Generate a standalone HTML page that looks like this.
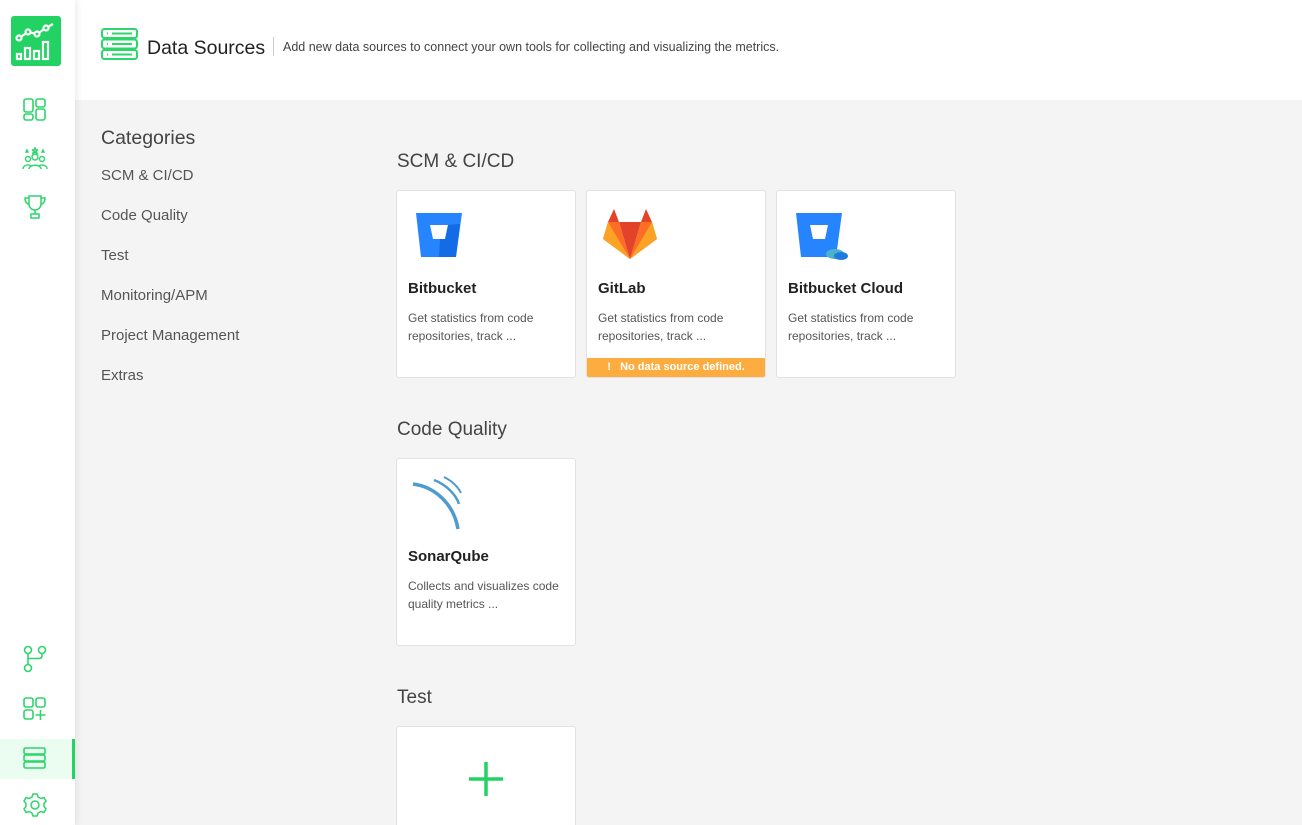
<!DOCTYPE html>
<html style="width:1302px;height:825px;overflow:hidden"><head><meta charset="utf-8"><style>
*{margin:0;padding:0;box-sizing:border-box}
body{width:1302px;height:825px;overflow:hidden;background:#f4f4f4;font-family:"Liberation Sans",sans-serif;position:relative}
.side{position:absolute;left:0;top:0;width:75px;height:825px;background:#fff;box-shadow:2px 0 6px rgba(0,0,0,.08);z-index:2}
.head{position:absolute;left:75px;top:0;right:0;height:100px;background:#fff}
.ic{position:absolute;left:22px}
.cat{position:absolute;left:101px;color:#555;font-size:15px}
.sec{position:absolute;left:397px;font-size:19px;color:#444}
.card{position:absolute;width:180px;height:188px;background:#fff;border:1px solid #e2e2e2;border-radius:3px;overflow:hidden}
.card .t{position:absolute;left:11px;top:89px;font-size:15px;font-weight:bold;color:#222}
.card .d{position:absolute;left:11px;top:118px;font-size:12px;color:#555;line-height:18px;width:160px}
.warn{position:absolute;left:0;right:0;bottom:0;height:19px;background:#fdad3f;color:#fff;font-size:11px;font-weight:bold;text-align:center;line-height:19px}
</style></head><body>
<div class="side">
<svg style="position:absolute;left:11px;top:16px" width="50" height="50" viewBox="0 0 50 50"><rect width="50" height="50" rx="3" fill="#22d363"/><g fill="none" stroke="#fff" stroke-width="2.2"><polyline points="8,22 17,16 26,18 35,12 42,8"/><circle cx="8" cy="22" r="2.5" fill="#22d363"/><circle cx="17" cy="16" r="2.5" fill="#22d363"/><circle cx="26" cy="18" r="2.5" fill="#22d363"/><circle cx="35" cy="12" r="2.5" fill="#22d363"/><rect x="6" y="38" width="4" height="5"/><rect x="14" y="32" width="5" height="11"/><rect x="23" y="35" width="5" height="8"/><rect x="32" y="26" width="5" height="17"/></g></svg>
<svg class="ic" style="top:98px" width="26" height="24" viewBox="0 0 26 24" fill="none" stroke="#2bd66b" stroke-width="1.6"><rect x="2" y="1" width="9" height="13" rx="2"/><rect x="14" y="1" width="9" height="8" rx="2"/><rect x="2" y="16" width="9" height="6" rx="2"/><rect x="14" y="11" width="9" height="11" rx="2"/></svg>
<svg class="ic" style="top:146px" width="26" height="24" viewBox="0 0 26 24" fill="none" stroke="#2bd66b" stroke-width="1.4"><circle cx="13" cy="11" r="3"/><circle cx="6" cy="13" r="2.5"/><circle cx="20" cy="13" r="2.5"/><path d="M7 23c0-5 12-5 12 0M1 23c0-4 6-5 8-3M25 23c0-4-6-5-8-3"/><path d="M13 2l1 2h2l-2 1 1 2-2-1-2 1 1-2-2-1h2zM5 4l1 2-2 0zM21 4l1 2-2 0z"/></svg>
<svg class="ic" style="top:194px" width="26" height="26" viewBox="0 0 26 26" fill="none" stroke="#2bd66b" stroke-width="1.5"><path d="M7 2h12v8a6 6 0 0 1-12 0z"/><path d="M7 4H3c0 4 2 6 4 6M19 4h4c0 4-2 6-4 6M13 16v4M9 20h8v4H9z"/></svg>
<svg class="ic" style="top:645px" width="26" height="28" viewBox="0 0 26 28" fill="none" stroke="#2bd66b" stroke-width="1.6"><circle cx="6" cy="5" r="3.5"/><circle cx="20" cy="5" r="3.5"/><circle cx="6" cy="23" r="3.5"/><path d="M6 8.5v11M20 8.5v2c0 2-1 3-3 3H6"/></svg>
<svg class="ic" style="top:696px" width="26" height="26" viewBox="0 0 26 26" fill="none" stroke="#2bd66b" stroke-width="1.6"><rect x="2" y="2" width="9" height="9" rx="2"/><rect x="14" y="2" width="9" height="9" rx="2"/><rect x="2" y="14" width="9" height="9" rx="2"/><path d="M18.5 14v10M13.5 19h10"/></svg>
<div style="position:absolute;left:0;top:739px;width:75px;height:40px;background:#ebfcf0;border-right:3px solid #22d363"></div>
<svg class="ic" style="top:746px" width="26" height="24" viewBox="0 0 26 24" fill="none" stroke="#2bd66b" stroke-width="1.6"><rect x="2" y="2" width="21" height="6" rx="1.5"/><rect x="2" y="9" width="21" height="6" rx="1.5"/><rect x="2" y="16" width="21" height="6" rx="1.5"/></svg>
<svg class="ic" style="top:792px" width="26" height="26" viewBox="0 0 26 26" fill="none" stroke="#2bd66b" stroke-width="1.5"><circle cx="13" cy="13" r="4"/><path d="M11 2h4l1 3 3 1.5 3-1 2 3.5-2 2.5v3l2 2.5-2 3.5-3-1-3 1.5-1 3h-4l-1-3-3-1.5-3 1-2-3.5 2-2.5v-3l-2-2.5 2-3.5 3 1 3-1.5z"/></svg>
</div>
<div class="head">
<svg style="position:absolute;left:26px;top:28px" width="37" height="32" viewBox="0 0 37 32" fill="none" stroke="#2bd66b" stroke-width="2"><rect x="1" y="1" width="35" height="9" rx="2.5"/><rect x="1" y="11.5" width="35" height="9" rx="2.5"/><rect x="1" y="22" width="35" height="9" rx="2.5"/><path d="M6 5.5h1M11 5.5h20M6 16h1M11 16h20M6 26.5h1M11 26.5h20"/></svg>
<div style="position:absolute;left:72px;top:37px;font-size:19.5px;color:#222">Data Sources</div>
<div style="position:absolute;left:198px;top:37px;width:1px;height:19px;background:#ccc"></div>
<div style="position:absolute;left:208px;top:40px;font-size:12.5px;color:#444">Add new data sources to connect your own tools for collecting and visualizing the metrics.</div>
</div>
<div class="cat" style="top:127px;font-size:19.5px;color:#444">Categories</div>
<div class="cat" style="top:167px">SCM &amp; CI/CD</div>
<div class="cat" style="top:207px">Code Quality</div>
<div class="cat" style="top:247px">Test</div>
<div class="cat" style="top:287px">Monitoring/APM</div>
<div class="cat" style="top:327px">Project Management</div>
<div class="cat" style="top:367px">Extras</div>

<div class="sec" style="top:151px">SCM &amp; CI/CD</div>
<div class="card" style="left:396px;top:190px">
<svg style="position:absolute;left:18px;top:21px" width="48" height="46" viewBox="0 0 48 46"><path d="M1 1h46l-6 44H6z" fill="#2684ff"/><path d="M15 13h18l-3 14h-12z" fill="#fff"/><path d="M33 13l-3 14h-5l-1 18h17l4-33z" fill="#0052cc" opacity=".5"/></svg>
<div class="t">Bitbucket</div><div class="d">Get statistics from code repositories, track ...</div></div>
<div class="card" style="left:586px;top:190px">
<svg style="position:absolute;left:15px;top:17px" width="56" height="52" viewBox="0 0 56 52"><path d="M28 51L1 31 6 14h11z" fill="#fc6d26"/><path d="M28 51L55 31 50 14H39z" fill="#fc6d26"/><path d="M28 51L17 14h22z" fill="#e24329"/><path d="M6 14L12 1l5 13z" fill="#e24329"/><path d="M50 14L44 1l-5 13z" fill="#e24329"/><path d="M1 31L6 14l22 37z" fill="#fca326"/><path d="M55 31l-5-17-22 37z" fill="#fca326"/></svg>
<div class="t">GitLab</div><div class="d">Get statistics from code repositories, track ...</div>
<div class="warn">!&nbsp;&nbsp; No data source defined.</div></div>
<div class="card" style="left:776px;top:190px">
<svg style="position:absolute;left:18px;top:21px" width="54" height="50" viewBox="0 0 54 50"><path d="M1 1h46l-6 44H6z" fill="#2684ff"/><path d="M15 13h18l-3 14h-12z" fill="#fff"/><ellipse cx="40" cy="42" rx="9" ry="5" fill="#4bb3c9"/><ellipse cx="46" cy="44" rx="7" ry="4" fill="#1f7ae0"/></svg>
<div class="t">Bitbucket Cloud</div><div class="d">Get statistics from code repositories, track ...</div></div>

<div class="sec" style="top:419px">Code Quality</div>
<div class="card" style="left:396px;top:458px">
<svg style="position:absolute;left:14px;top:16px" width="58" height="56" viewBox="0 0 58 56" fill="none" stroke="#4e9bcd"><path d="M2 9c23 3 41 21 45 45" stroke-width="3.5"/><path d="M23 5c13 5 22 15 25 24" stroke-width="2.5"/><path d="M33 2c8 4 14 10 17 16" stroke-width="2"/></svg>
<div class="t">SonarQube</div><div class="d">Collects and visualizes code quality metrics ...</div></div>

<div class="sec" style="top:687px">Test</div>
<div class="card" style="left:396px;top:726px;height:99px;border-bottom:none;border-radius:3px 3px 0 0">
<svg style="position:absolute;left:71px;top:34px" width="36" height="36" viewBox="0 0 36 36"><path d="M18 1v34M1 18h34" stroke="#22d363" stroke-width="3.5"/></svg></div>
</body></html>
